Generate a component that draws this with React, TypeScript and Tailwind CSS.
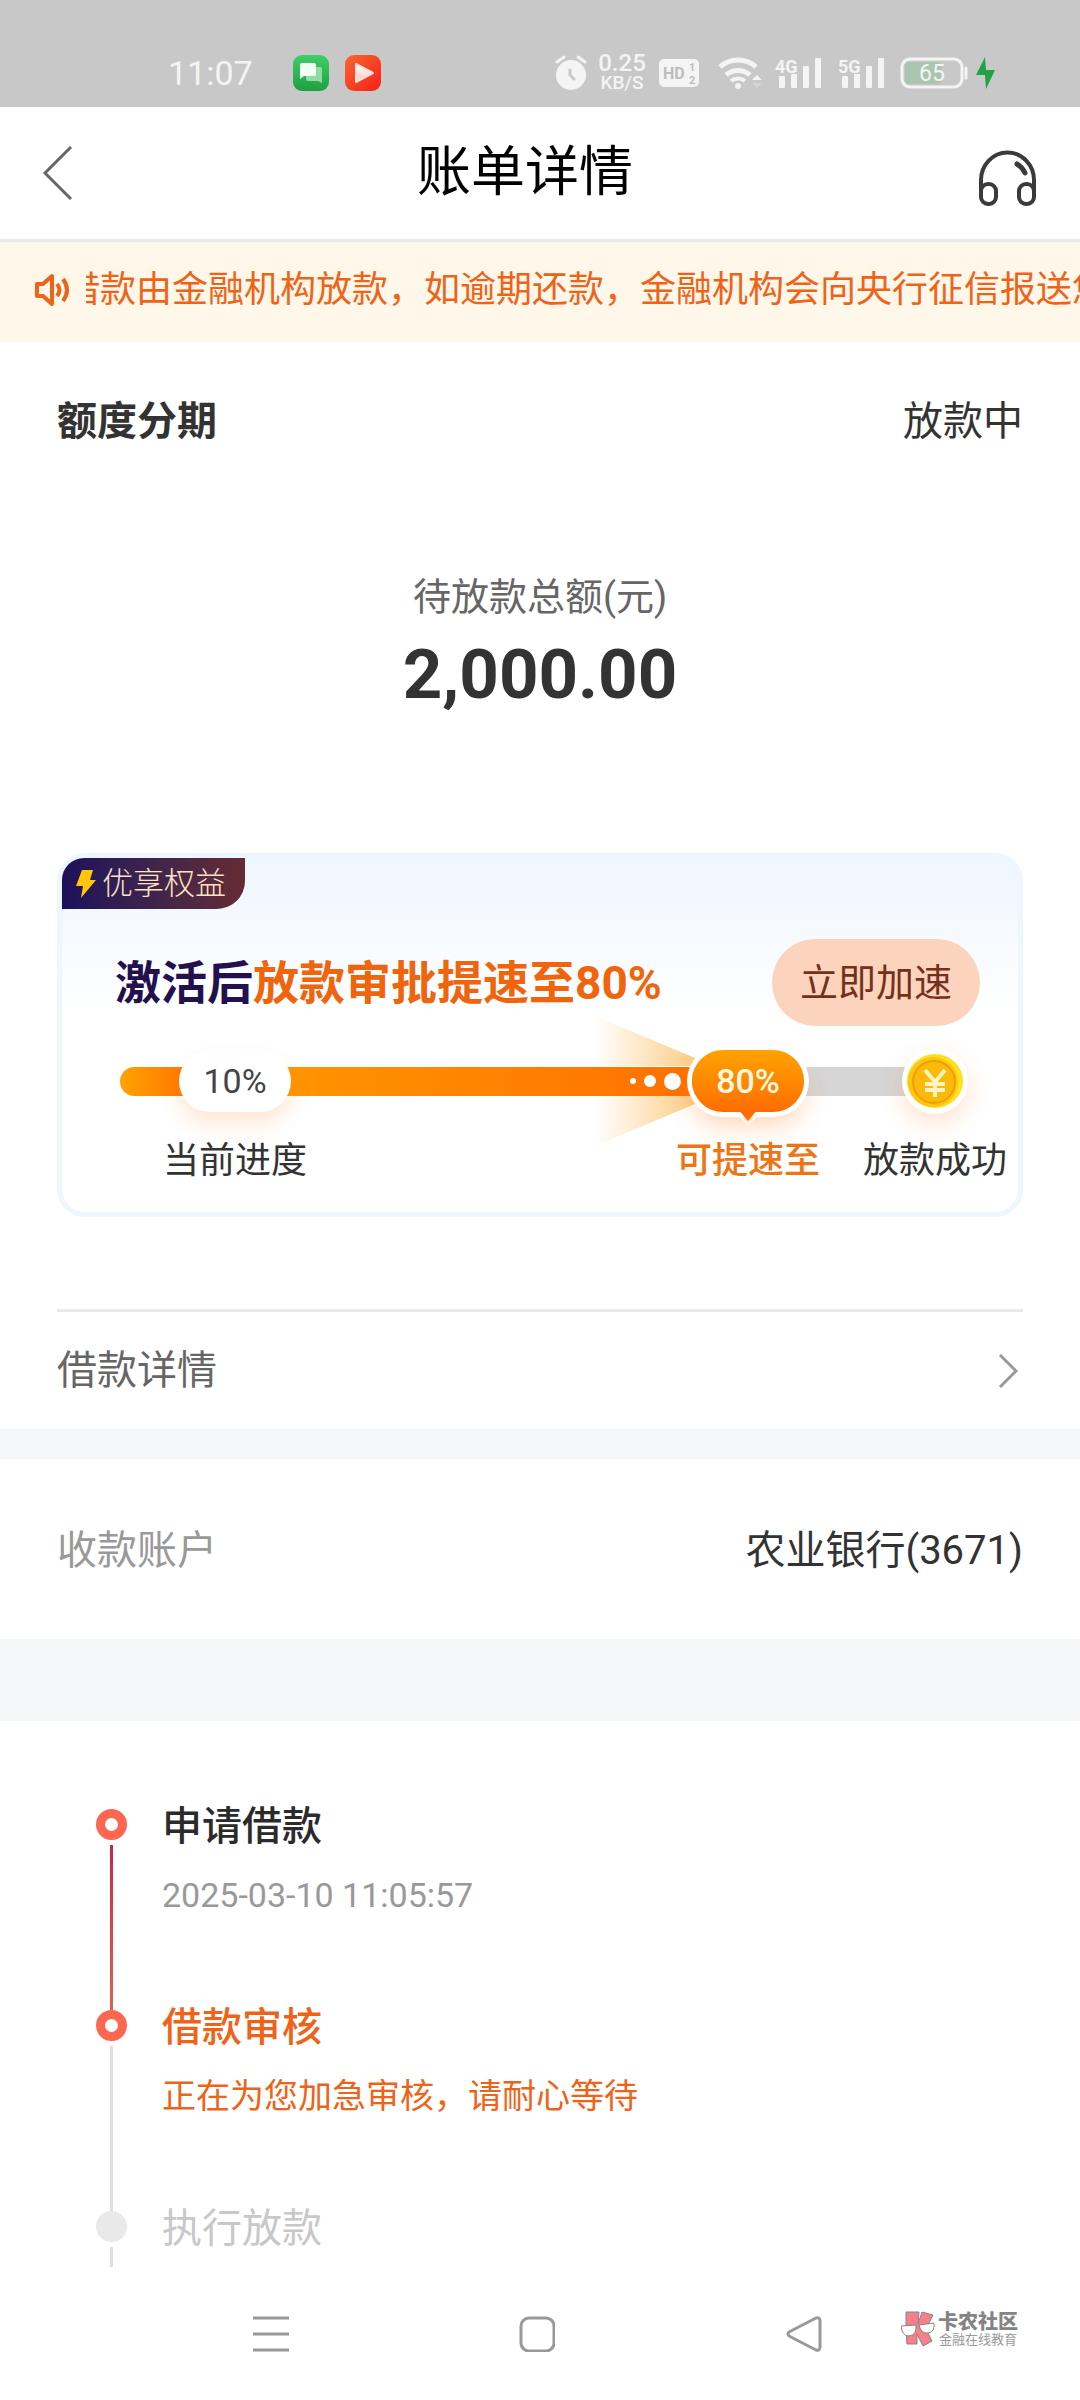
import type { ReactNode } from "react";
import clsx from "clsx";

type StepState = "done" | "active" | "pending";

interface Step {
  title: string;
  note?: string;
  state: StepState;
}

const STEPS: Step[] = [
  { title: "申请借款", note: "2025-03-10 11:05:57", state: "done" },
  { title: "借款审核", note: "正在为您加急审核，请耐心等待", state: "active" },
  { title: "执行放款", state: "pending" },
];

function SignalBars({ label }: { label: string }) {
  return (
    <svg className="overflow-visible" width="48" height="34" viewBox="0 0 48 34" aria-hidden="true">
      <text x="0" y="17" fontSize="18" fontWeight="700" fill="#f4f4f4">
        {label}
      </text>
      <g fill="#f4f4f4">
        <rect x="4" y="20" width="6" height="12" rx="1" />
        <rect x="16" y="18" width="6" height="14" rx="1" />
        <rect x="28" y="10" width="6" height="22" rx="1" />
        <rect x="40" y="2" width="6" height="30" rx="1" />
      </g>
    </svg>
  );
}

function StatusBar() {
  return (
    <div className="flex h-[107px] items-center bg-[#c8c8c8] pt-[38px] pr-[84px] pl-[168px] text-[#f4f4f4]">
      <span className="w-[125px] text-[34px] leading-[40px]">11:07</span>
      <svg width="36" height="36" viewBox="0 0 36 36" aria-hidden="true">
        <defs>
          <linearGradient id="chat" x1="0" y1="0" x2="0" y2="1">
            <stop offset="0" stopColor="#3fce68" />
            <stop offset="1" stopColor="#1f9f43" />
          </linearGradient>
        </defs>
        <rect width="36" height="36" rx="9" fill="url(#chat)" />
        <path d="M15 12h12a2 2 0 0 1 2 2v14l-4-2H15a2 2 0 0 1-2-2V14a2 2 0 0 1 2-2z" fill="#8fdba4" />
        <path d="M9 8h12a2 2 0 0 1 2 2v9a2 2 0 0 1-2 2H11l-4 3V10a2 2 0 0 1 2-2z" fill="#f2fff5" />
      </svg>
      <svg className="ml-4" width="36" height="36" viewBox="0 0 36 36" aria-hidden="true">
        <defs>
          <linearGradient id="video" x1="0" y1="0" x2="1" y2="1">
            <stop offset="0" stopColor="#f9662f" />
            <stop offset="1" stopColor="#f5201a" />
          </linearGradient>
          <linearGradient id="play" x1="0" y1="0" x2="0" y2="1">
            <stop offset="0" stopColor="#fff" />
            <stop offset="1" stopColor="#ffc4bc" />
          </linearGradient>
        </defs>
        <rect width="36" height="36" rx="9" fill="url(#video)" />
        <path d="M11 9v18l17-9z" fill="url(#play)" stroke="#ffe0dc" strokeWidth="2" strokeLinejoin="round" />
      </svg>
      <div className="ml-auto flex items-center">
        <svg width="32" height="36" viewBox="0 0 32 36" fill="none" stroke="#f4f4f4" strokeWidth="3" strokeLinecap="round" aria-hidden="true">
          <circle cx="16" cy="20" r="15" fill="#f4f4f4" stroke="none" />
          <path d="M2 7l7-5M30 7l-7-5" />
          <path d="M15 15v5l4 4" stroke="#c8c8c8" />
        </svg>
        <span className="ml-2 flex w-[54px] flex-col items-center font-medium">
          <span className="text-[24px] leading-[19px]">0.25</span>
          <span className="text-[19px] leading-[19px]">KB/S</span>
        </span>
        <svg className="ml-[10px]" width="40" height="28" viewBox="0 0 40 28" fontWeight="700" fill="#bdbdbd" aria-hidden="true">
          <rect width="40" height="28" rx="5" fill="#f4f4f4" />
          <text x="4" y="20" fontSize="16">HD</text>
          <text x="30" y="12" fontSize="11">1</text>
          <text x="30" y="25" fontSize="11">2</text>
        </svg>
        <svg className="ml-[19px]" width="44" height="34" viewBox="0 0 44 34" fill="none" stroke="#f4f4f4" strokeWidth="5" aria-hidden="true">
          <path d="M2 11a27 27 0 0 1 36 0" />
          <path d="M8 19a18 18 0 0 1 24 0" />
          <path d="M13 25a11 11 0 0 1 14 0" strokeWidth="4" />
          <circle cx="20" cy="30" r="3" fill="#f4f4f4" stroke="none" />
          <path d="M34 24l5-5 5 5z" fill="#f4f4f4" stroke="none" />
          <path d="M34 27l5 5 5-5z" fill="#d4d4d4" stroke="none" />
        </svg>
        <span className="ml-[13px]">
          <SignalBars label="4G" />
        </span>
        <span className="ml-[15px]">
          <SignalBars label="5G" />
        </span>
        <svg className="ml-[14px]" width="70" height="32" viewBox="0 0 70 32" aria-hidden="true">
          <rect x="5" y="5" width="36" height="22" rx="4" fill="#a9c5b0" />
          <rect x="2" y="2" width="60" height="28" rx="8" fill="none" stroke="#f4f4f4" strokeWidth="3" />
          <path d="M66 11v10" stroke="#f4f4f4" strokeWidth="3" strokeLinecap="round" />
          <text x="32" y="24" fontSize="23" textAnchor="middle" fill="#f4f4f4">65</text>
        </svg>
        <svg className="ml-[6px]" width="20" height="32" viewBox="0 0 20 32" aria-hidden="true">
          <path d="M9 0L0 18h9l1 14 9-19h-9z" fill="#22a245" />
        </svg>
      </div>
    </div>
  );
}

function Header() {
  return (
    <header className="grid h-[135px] grid-cols-[1fr_auto_1fr] items-center border-b-[3px] border-[#e9e9e7] bg-white px-[42px]">
      <button type="button" aria-label="返回" className="justify-self-start">
        <svg width="32" height="54" viewBox="0 0 32 54" fill="none" stroke="#666" strokeWidth="3">
          <path d="M29 1L3 27l26 26" />
        </svg>
      </button>
      <h1 className="pr-[30px] text-[54px] leading-[64px] text-black">账单详情</h1>
      <button type="button" aria-label="客服" className="justify-self-end pt-3">
        <svg width="60" height="58" viewBox="0 0 60 58" fill="none" stroke="#3a3a3a" strokeWidth="4" strokeLinecap="round">
          <path d="M3 44V30a26 27 0 0 1 53 0v14" />
          <rect x="3" y="34" width="15" height="20" rx="7" />
          <rect x="41" y="34" width="15" height="20" rx="7" />
          <path d="M39 14q5 3 8 9" strokeWidth="5" />
        </svg>
      </button>
    </header>
  );
}

function Notice() {
  return (
    <div className="flex h-[100px] items-center gap-4 bg-[#fef7ea] pb-1 pl-[34px] text-[#ee6317]">
      <svg className="shrink-0" width="36" height="34" viewBox="0 0 36 34" fill="none" stroke="currentColor" strokeWidth="4" strokeLinejoin="round" aria-hidden="true">
        <path d="M3 11h6l9-8v28l-9-8H3z" />
        <path d="M23 11q5 6 0 12M29 6q8 11 0 22" />
      </svg>
      <div className="flex min-w-0 flex-1 overflow-hidden">
        <p className="-ml-[22px] text-[36px] leading-[48px] whitespace-nowrap">
          借款由金融机构放款，如逾期还款，金融机构会向央行征信报送您
        </p>
      </div>
    </div>
  );
}

function Coin() {
  return (
    <span className="relative -ml-1 flex size-[66px] shrink-0 items-center justify-center rounded-full bg-white shadow-[0_10px_24px_rgba(255,120,20,0.2)]">
      <svg width="56" height="54" viewBox="0 0 56 54" aria-hidden="true">
        <ellipse cx="28" cy="27" rx="28" ry="27" fill="#ffe01c" />
        <circle cx="26" cy="28" r="25" fill="#fdc50d" />
        <circle cx="27" cy="28" r="21" fill="#fbb90a" stroke="#ee9f00" strokeWidth="2" />
        <path d="M18 16l10 12 10-12M28 27v16M18 30h20M18 36h20" fill="none" stroke="#fff3c4" strokeWidth="4" />
      </svg>
    </span>
  );
}

function SpeedTrack() {
  return (
    <div className="flex h-[66px] items-center pr-[50px] pl-[58px] text-[34px] leading-[40px]">
      <span className="h-[29px] w-[70px] shrink-0 rounded-l-full bg-linear-to-r from-[#ffa200] to-[#ff7300]" />
      <span className="relative z-10 -mx-[11px] flex h-[62px] w-[112px] shrink-0 items-center justify-center rounded-full bg-white text-[#444] shadow-[0_12px_20px_rgba(255,130,30,0.18)]">
        10%
      </span>
      <span className="relative flex h-[29px] flex-1 items-center justify-end bg-linear-to-r from-[#ff9500] to-[#ff6f00] pr-[22px]">
        <svg className="absolute top-1/2 right-[8px] -translate-y-1/2" width="100" height="130" viewBox="0 0 100 130" aria-hidden="true">
          <defs>
            <linearGradient id="beam">
              <stop offset="0" stopColor="#ffb145" stopOpacity="0" />
              <stop offset="1" stopColor="#ffb145" stopOpacity="0.65" />
            </linearGradient>
          </defs>
          <path d="M0 0L100 42V50H0zM0 130L100 88V80H0z" fill="url(#beam)" />
        </svg>
        <span className="relative flex items-center gap-2">
          <span className="size-[6px] rounded-full bg-white" />
          <span className="size-3 rounded-full bg-white" />
          <span className="size-[17px] rounded-full bg-white" />
        </span>
      </span>
      <span className="relative z-10 -mx-[11px] flex h-[62px] w-[112px] shrink-0 items-center justify-center rounded-full bg-linear-to-b from-[#ffa200] to-[#ff6c00] font-medium text-[#fff9e0] shadow-[0_0_0_5px_#fff,0_14px_24px_rgba(255,130,30,0.3)]">
        80%
        <svg className="absolute top-[59px] left-1/2 -translate-x-1/2" width="32" height="16" viewBox="0 0 32 16" aria-hidden="true">
          <path d="M2 3h4l10 12L26 3h4L16 16z" fill="#fff" />
          <path d="M6 0h20L16 12z" fill="#ff6e00" />
        </svg>
      </span>
      <span className="h-[29px] w-[113px] shrink-0 bg-[#d5d5d5]" />
      <Coin />
    </div>
  );
}

function BoostCard() {
  return (
    <section className="rounded-[28px] border-[5px] border-[#eef6ff] bg-linear-to-b from-[#eef6ff] to-white to-45% pb-[27px]">
      <div className="flex h-[51px] w-[183px] items-center gap-[6px] rounded-tl-[22px] rounded-br-[28px] bg-linear-to-r from-[#1d0f5b] to-[#662b33] pl-[14px] text-[#fbe3c8]">
        <svg width="20" height="28" viewBox="0 0 20 28" aria-hidden="true">
          <path d="M6 0h11l-3 10h6L5 28l2-12H0z" fill="#ffc60a" />
        </svg>
        <span className="text-[31px] leading-[36px] font-light">优享权益</span>
      </div>
      <div className="flex items-center justify-between pt-[30px] pr-[38px] pl-[53px]">
        <h2 className="text-[46px] leading-[56px] font-bold whitespace-nowrap text-[#ef640c]">
          <span className="text-[#23104f]">激活后</span>放款审批提速至80%
        </h2>
        <button
          type="button"
          className="h-[87px] w-[208px] shrink-0 rounded-full bg-[#fcd3bd] text-[38px] leading-[48px] text-[#74301a]"
        >
          立即加速
        </button>
      </div>
      <div className="pt-[22px]">
        <SpeedTrack />
      </div>
      <div className="flex items-center pt-[23px] pr-[11px] pl-[101px] text-[36px] leading-[48px] text-[#333]">
        <span>当前进度</span>
        <span className="ml-auto font-medium text-[#ee7414]">可提速至</span>
        <span className="ml-[43px]">放款成功</span>
      </div>
    </section>
  );
}

function Row({ label, children }: { label: ReactNode; children: ReactNode }) {
  return (
    <div className="flex w-full items-center justify-between text-[40px] leading-[56px]">
      {label}
      {children}
    </div>
  );
}

function StepItem({ title, note, state }: Step) {
  const pending = state === "pending";
  return (
    <li className="flex gap-[35px]">
      <div className="flex w-[31px] flex-col items-center pt-[14px]">
        <span
          className={clsx(
            "size-[31px] shrink-0 rounded-full",
            pending ? "bg-[#e9e9e9]" : "border-[9px] border-[#fd6650] bg-white",
          )}
        />
        <span
          className={clsx(
            "mt-[5px] -mb-[14px] w-[3px] flex-1",
            state === "done" ? "bg-linear-to-b from-[#c8234b] to-[#e0604c]" : "bg-[#dfdfdf]",
          )}
        />
      </div>
      <div className={clsx(pending ? "h-[58px]" : "h-[201px]")}>
        <h3
          className={clsx(
            "text-[40px] leading-[64px]",
            state === "done" && "font-medium text-[#2b2b2b]",
            state === "active" && "font-medium text-[#ee6317]",
            pending && "text-[#c8c8c8]",
          )}
        >
          {title}
        </h3>
        {note && (
          <p className={clsx("pt-3 text-[34px] leading-[48px]", state === "active" ? "text-[#ee6317]" : "text-[#999]")}>
            {note}
          </p>
        )}
      </div>
    </li>
  );
}

function Watermark() {
  return (
    <div className="absolute top-[44px] right-[62px] flex items-center gap-[3px] text-[#848484]">
      <svg width="34" height="36" viewBox="0 0 34 36" stroke="#858585" strokeWidth="1" aria-hidden="true">
        <path d="M5 1h13l-1 12 4-12 11 3-7 14 6 12-9 5-6-12v10H6L5 20z" fill="#f77f8b" />
        <path d="M0 15l15-1q1 10-7 11-7 0-8-10zM18 14l15-2q1 9-6 10-7 1-9-8z" fill="#fff" />
      </svg>
      <div className="flex flex-col items-center">
        <span className="text-[20px] leading-[22px] font-black">卡农社区</span>
        <span className="text-[13px] leading-[14px] text-[#999]">金融在线教育</span>
      </div>
    </div>
  );
}

function NavBar() {
  return (
    <nav className="relative mt-auto grid h-[133px] grid-cols-3 items-center justify-items-center bg-white pr-[143px] pl-[138px]">
      <button type="button" aria-label="最近任务">
        <svg width="36" height="36" viewBox="0 0 36 36" stroke="#999" strokeWidth="3">
          <path d="M0 2h36M0 18h36M0 34h36" />
        </svg>
      </button>
      <button type="button" aria-label="主屏幕">
        <svg width="36" height="36" viewBox="0 0 36 36" fill="none" stroke="#999" strokeWidth="3">
          <rect x="2" y="2" width="33" height="33" rx="8" />
        </svg>
      </button>
      <button type="button" aria-label="后退">
        <svg width="36" height="36" viewBox="0 0 36 36" fill="none" stroke="#999" strokeWidth="3" strokeLinejoin="round">
          <path d="M30 2L3 16q-2 2 0 4l27 14q4 1 4-3V5q0-4-4-3z" />
        </svg>
      </button>
      <Watermark />
    </nav>
  );
}

export default function App() {
  return (
    <div className="flex min-h-screen flex-col overflow-x-hidden bg-white font-[Roboto,'Noto_Sans_CJK_SC',sans-serif] text-[#333]">
      <StatusBar />
      <Header />
      <Notice />
      <main>
        <section className="px-[57px] pt-[52px] pb-[92px]">
          <Row label={<h2 className="font-bold">额度分期</h2>}>
            <span>放款中</span>
          </Row>
          <div className="pt-[123px] pb-[138px] text-center">
            <p className="text-[38px] leading-[48px] text-[#666]">待放款总额(元)</p>
            <p className="pt-[14px] text-[69px] leading-[80px] font-bold">2,000.00</p>
          </div>
          <BoostCard />
        </section>
        <a href="#loan" className="mx-[57px] flex h-[120px] items-center border-t-[3px] border-[#e9e9e9] text-[#666]">
          <Row label="借款详情">
            <svg className="mr-1" width="22" height="34" viewBox="0 0 22 34" fill="none" stroke="#999" strokeWidth="3" aria-hidden="true">
              <path d="M3 1l16 16L3 33" />
            </svg>
          </Row>
        </a>
        <div className="h-[30px] bg-[#f6f7f9]" />
        <section className="flex h-[180px] items-center px-[57px] pt-1">
          <Row label={<span className="text-[#999]">收款账户</span>}>
            <span>农业银行(3671)</span>
          </Row>
        </section>
        <div className="h-[82px] bg-[#f6f7f9]" />
        <ol className="pt-[74px] pl-[96px]">
          {STEPS.map((step) => (
            <StepItem key={step.title} {...step} />
          ))}
        </ol>
      </main>
      <NavBar />
    </div>
  );
}
